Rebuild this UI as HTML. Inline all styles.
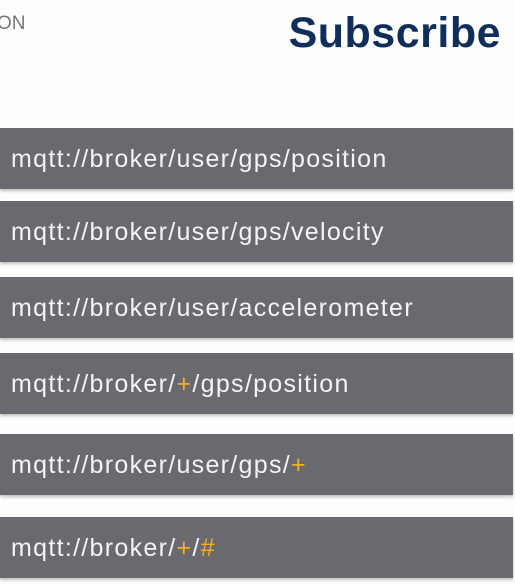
<!DOCTYPE html>
<html><head><style>
body{margin:0;width:515px;height:585px;background:#fdfdfc;position:relative;overflow:hidden;font-family:"Liberation Sans",sans-serif}
.on{position:absolute;left:-3px;top:13px;font-size:19px;color:#777}
.sub{position:absolute;right:14px;top:9px;font-size:43px;font-weight:bold;color:#0f2f5a;letter-spacing:0.5px}
.bar{position:absolute;left:0;width:513px;height:61px;background:#6a6970;box-shadow:0 2px 3px rgba(0,0,0,0.25);color:#f4f4f4;font-size:25px;line-height:63px;padding-left:11px;box-sizing:border-box;letter-spacing:1.3px}
.y{color:#f2b21d}
</style></head><body>
<div class="on">ON</div>
<div class="sub">Subscribe</div>
<div class="bar" style="top:128px">mqtt://broker/user/gps/position</div>
<div class="bar" style="top:201px">mqtt://broker/user/gps/velocity</div>
<div class="bar" style="top:277px">mqtt://broker/user/accelerometer</div>
<div class="bar" style="top:353px">mqtt://broker/<span class="y">+</span>/gps/position</div>
<div class="bar" style="top:434px">mqtt://broker/user/gps/<span class="y">+</span></div>
<div class="bar" style="top:517px">mqtt://broker/<span class="y">+</span>/<span class="y">#</span></div>
</body></html>
